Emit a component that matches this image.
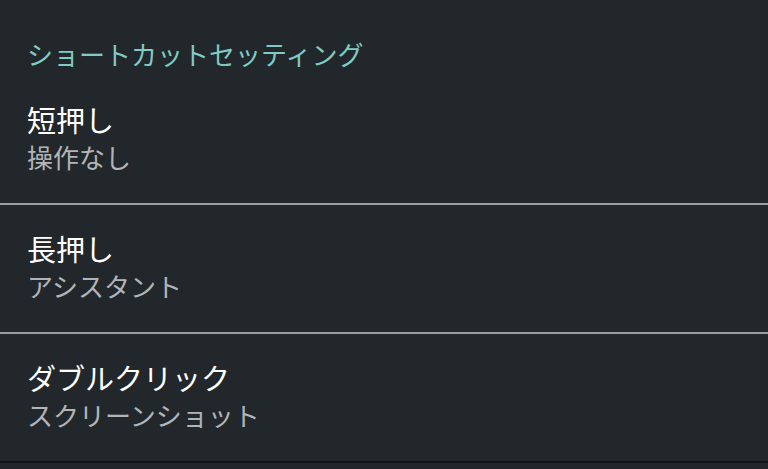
import React from 'react';

// Shortcut settings list, dark Android-style preference screen
const rows = [
  { title: '短押し', summary: '操作なし' },
  { title: '長押し', summary: 'アシスタント' },
  { title: 'ダブルクリック', summary: 'スクリーンショット' },
];

const font = { fontFamily: '"Noto Sans CJK JP", "Noto Sans", sans-serif' };

export default function App() {
  return (
    <div className="w-[768px] h-[469px] bg-[#22272b] overflow-hidden" style={font}>
      {/* category header */}
      <div className="h-[76px] pl-[27px] pt-[37px]">
        <div className="text-[26px] leading-[34px] text-[#80cbc4]">ショートカットセッティング</div>
      </div>

      {rows.map((r, i) => (
        <div key={r.title}>
          <div className="h-[127px] pl-[27px] pt-[23px]">
            <div className="text-[29px] leading-[40px] text-white">{r.title}</div>
            <div className="text-[26px] leading-[36px] text-[#b2b5b7]">{r.summary}</div>
          </div>
          <div className={i < rows.length - 1 ? 'h-[2px] bg-[#9a9ea1]' : 'h-[2px] bg-[#12161a]'} />
        </div>
      ))}
    </div>
  );
}
